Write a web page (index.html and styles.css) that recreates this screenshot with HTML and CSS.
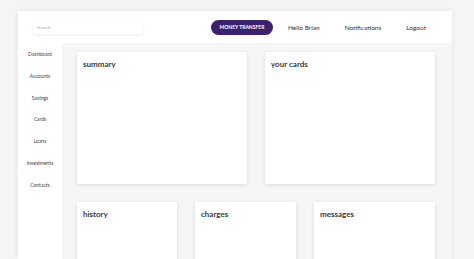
FILE: index.html
```html
<!DOCTYPE html>
<html>
<head>
<meta charset="utf-8">
<link rel="stylesheet" href="styles.css">
</head>
<body>
<div class="app">
  <header class="topbar">
    <div class="search">Search</div>
    <nav class="nav">
      <a class="btn">MONEY TRANSFER</a>
      <a class="link hello">Hello Brian</a>
      <a class="link notif">Notifications</a>
      <a class="link logout">Logout</a>
    </nav>
  </header>
  <div class="body">
    <aside class="sidebar">
      <a>Dashboard</a>
      <a>Accounts</a>
      <a>Savings</a>
      <a>Cards</a>
      <a>Loans</a>
      <a>Investments</a>
      <a>Contacts</a>
    </aside>
    <main class="main">
      <div class="row top">
        <section class="card"><h2>summary</h2></section>
        <section class="card"><h2>your cards</h2></section>
      </div>
      <div class="row bottom">
        <section class="card"><h2>history</h2></section>
        <section class="card"><h2>charges</h2></section>
        <section class="card"><h2>messages</h2></section>
      </div>
    </main>
  </div>
</div>
</body>
</html>
```

FILE: styles.css
```css
* { box-sizing: border-box; }
html, body { margin: 0; padding: 0; }
html { height: 259px; overflow: hidden; }
body {
  background: #f5f5f5;
  font-family: Lato, "Open Sans", sans-serif;
  color: #333;
  height: 259px;
  overflow: hidden;
  padding: 11px 0 0 18px;
}
.app {
  width: 434px;
  background: #fff;
  box-shadow: 0 0 6px rgba(0,0,0,0.07);
  height: 248px;
  overflow: hidden;
  display: flex;
  flex-direction: column;
}
.topbar {
  height: 32px;
  flex: none;
  display: flex;
  align-items: center;
  padding: 0 0 0 15px;
}
.search {
  width: 110px;
  height: 13px;
  font-size: 4.5px;
  color: #aaa;
  padding: 0 0 0 4px;
  line-height: 13px;
  box-shadow: 0 1px 3px rgba(0,0,0,0.08);
  border-radius: 2px;
}
.nav {
  display: flex;
  align-items: center;
  margin-left: 68px;
  font-size: 6.5px;
}
.btn {
  background: #3c2170;
  color: #fff;
  font-weight: 700;
  font-size: 5px;
  width: 62px;
  height: 15px;
  border-radius: 8px;
  display: flex;
  align-items: center;
  justify-content: center;
}
.link { color: #333; }
.hello { margin-left: 15px; }
.notif { margin-left: 25px; }
.logout { margin-left: 25px; }
.body {
  flex: 1;
  min-height: 0;
  display: flex;
}
.sidebar {
  width: 44px;
  display: flex;
  flex-direction: column;
  align-items: center;
  padding-top: 8px;
}
.sidebar a {
  font-size: 5px;
  color: #444;
  height: 21.8px;
  line-height: 6px;
}
.main {
  flex: 1;
  background: #f6f6f6;
  padding: 9px 17px 0 15px;
  display: flex;
  flex-direction: column;
  gap: 18px;
}
.row { display: grid; gap: 18px; flex: none; }
.top { grid-template-columns: 1fr 1fr; height: 132px; }
.bottom { grid-template-columns: 100px 101px 1fr; height: 80px; }
.card {
  background: #fff;
  box-shadow: 0 1px 4px rgba(0,0,0,0.12);
  padding: 7px 6px;
}
.card h2 {
  margin: 0;
  font-size: 8px;
  font-weight: 700;
  color: #3a3a3a;
}
```
